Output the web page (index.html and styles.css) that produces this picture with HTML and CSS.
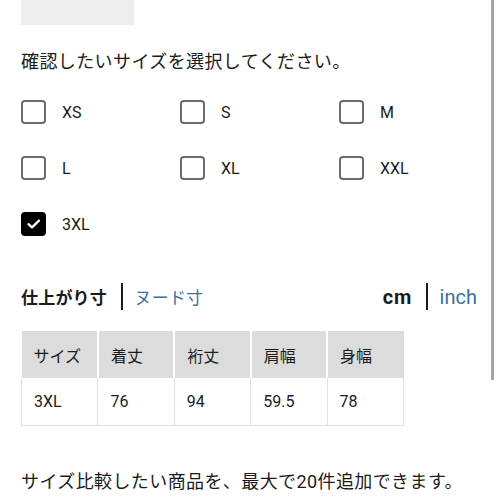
FILE: index.html
```html
<!DOCTYPE html>
<html>
<head>
    <meta charset="utf-8" />
    <title>サイズ</title>
    <meta name="viewport" content="width=device-width, initial-scale=1">
    <link rel="stylesheet" href="styles.css">
</head>
<body>
    <div class="pagina">
        <div class="caixaTopo"></div>
        <p class="titulo">確認したいサイズを選択してください。</p>

        <div class="grade">
            <label class="opcao"><span class="caixa"></span>XS</label>
            <label class="opcao"><span class="caixa"></span>S</label>
            <label class="opcao"><span class="caixa"></span>M</label>
            <label class="opcao"><span class="caixa"></span>L</label>
            <label class="opcao"><span class="caixa"></span>XL</label>
            <label class="opcao"><span class="caixa"></span>XXL</label>
            <label class="opcao"><span class="caixa marcada">
                <svg width="16" height="16" viewBox="0 0 16 16"><polyline points="2.5,8.2 6,11.3 13,4.6" fill="none" stroke="#fff" stroke-width="2.3" stroke-linecap="round" stroke-linejoin="round"/></svg>
            </span>3XL</label>
        </div>

        <div class="abas">
            <div class="grupo">
                <span class="ativo jp">仕上がり寸</span>
                <span class="barra"></span>
                <span class="link jp">ヌード寸</span>
            </div>
            <div class="grupo">
                <span class="ativo lat">cm</span>
                <span class="barra"></span>
                <span class="link lat">inch</span>
            </div>
        </div>

        <table class="tabela">
            <tr>
                <th>サイズ</th><th>着丈</th><th>裄丈</th><th>肩幅</th><th>身幅</th>
            </tr>
            <tr>
                <td>3XL</td><td>76</td><td>94</td><td>59.5</td><td>78</td>
            </tr>
        </table>

        <p class="rodape">サイズ比較したい商品を、最大で20件追加できます。</p>
    </div>
    <div class="rolagem"></div>
</body>
</html>
```

FILE: styles.css
```css
body{
    margin: 0;
    background: #fff;
    color: #1b1b1b;
    font-family: Roboto, "Noto Sans CJK JP", sans-serif;
}
.pagina{
    width: 456px;
    padding-left: 21px;
}
.caixaTopo{
    width: 113px;
    height: 25px;
    background: #eeeeee;
}
.titulo{
    margin: 25px 0 0 0;
    font-size: 18px;
    line-height: 24px;
    letter-spacing: 0.4px;
}
.grade{
    display: grid;
    grid-template-columns: 159px 159px 159px;
    row-gap: 32px;
    margin-top: 26px;
}
.opcao{
    display: flex;
    align-items: center;
    gap: 16px;
    font-size: 16px;
    height: 24px;
}
.caixa{
    box-sizing: border-box;
    width: 25px;
    height: 24px;
    border: 2px solid #6b6b6b;
    border-radius: 4px;
    display: flex;
    align-items: center;
    justify-content: center;
}
.marcada{
    background: #000;
    border-color: #000;
}
.abas{
    display: flex;
    justify-content: space-between;
    align-items: center;
    margin-top: 47px;
    height: 27px;
}
.grupo{
    display: flex;
    align-items: center;
}
.barra{
    width: 1.5px;
    height: 27px;
    background: #1b1b1b;
    margin: 0 12px 0 14px;
}
.jp{
    font-size: 17px;
    letter-spacing: 0.2px;
}
.lat{
    font-size: 20px;
}
.ativo{
    font-weight: bold;
}
.ativo.lat{
    letter-spacing: 0.8px;
}
.link{
    color: #3d6fa0;
}
.tabela{
    margin-top: 21px;
    width: 383px;
    table-layout: fixed;
    border-collapse: collapse;
    font-size: 16px;
}
.tabela th{
    background: #dcdcdc;
    font-weight: normal;
    text-align: left;
    height: 47px;
    padding: 0 0 0 12px;
    border-right: 2px solid #fff;
}
.tabela th:last-child{
    border-right: none;
}
.tabela td{
    height: 47px;
    padding: 0 0 0 12px;
    border: 1px solid #e2e2e2;
    border-top: none;
}
.rodape{
    margin: 43px 0 0 0;
    font-size: 18px;
    line-height: 26px;
    letter-spacing: 0.4px;
}
.rolagem{
    position: fixed;
    top: 0;
    left: 491px;
    width: 3px;
    height: 380px;
    background: #a3a3a3;
}
```
